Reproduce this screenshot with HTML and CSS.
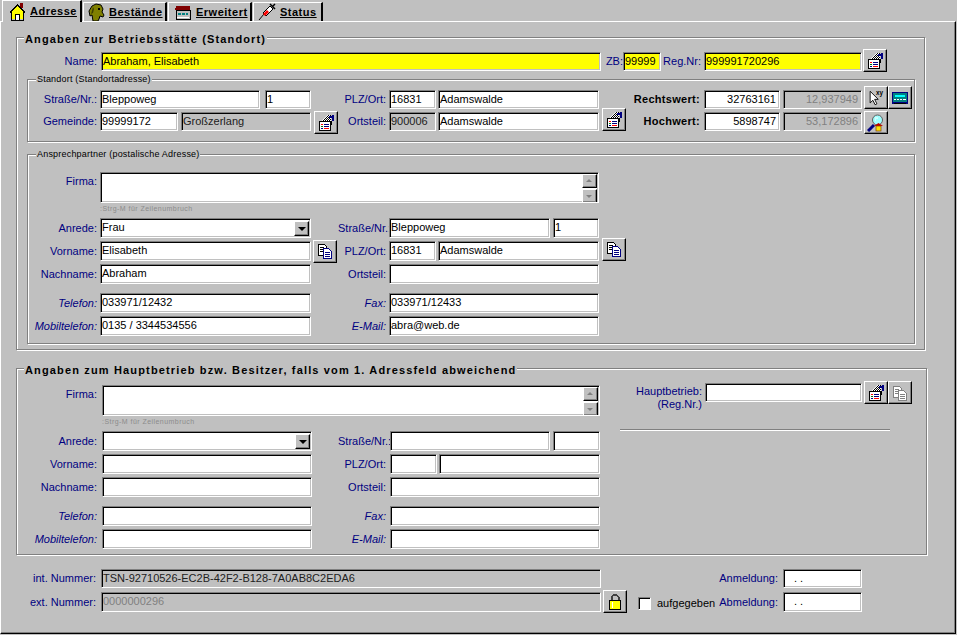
FILE: index.html
```html
<!DOCTYPE html>
<html lang="de">
<head>
  <meta charset="UTF-8">
  <title>Adresse</title>
  <link rel="stylesheet" href="styles.css">
</head>
<body>

<!-- Icons -->
<svg class="defs" width="0" height="0">
  <defs>
    <pattern id="dither" width="2" height="2" patternUnits="userSpaceOnUse">
      <rect width="2" height="2" fill="#fff"/>
      <rect width="1" height="1" fill="#000"/>
      <rect x="1" y="1" width="1" height="1" fill="#000"/>
    </pattern>
  </defs>
  <symbol id="i-house" viewBox="0 0 18 18" shape-rendering="crispEdges">
    <rect x="12" y="0" width="3" height="5" fill="#800000"/>
    <path d="M1 9 9 1l8 8-1 1-7-7-7 7z" fill="#000"/>
    <path d="M3 9 9 3l6 6v7H3z" fill="#ffff00"/>
    <path d="M3 9v8h12V9" fill="none" stroke="#000"/>
    <rect x="7" y="11" width="4" height="6" fill="#fff" stroke="#000"/>
  </symbol>
  <symbol id="i-dog" viewBox="0 0 18 18">
    <path d="M1 8 4 3l4-2 5 1 2 4-1 3 2 3-1 2-3-1-1 3-1 2H5L4 12 2 13z" fill="#808000" stroke="#000"/>
    <path d="M5 4 3 11l2-1 1-4z" fill="#404000"/>
    <rect x="10" y="5" width="2" height="2"/>
  </symbol>
  <symbol id="i-cabinet" viewBox="0 0 18 18" shape-rendering="crispEdges">
    <path d="M2 3h14v4H1z" fill="#800000"/>
    <rect x="2" y="7" width="14" height="9" fill="#c0c0c0" stroke="#000"/>
    <rect x="4" y="10" width="3" height="2" fill="#008080"/>
    <rect x="8" y="10" width="3" height="2" fill="#008080"/>
    <rect x="12" y="10" width="2" height="2" fill="#008080"/>
    <rect x="3" y="14" width="12" height="1" fill="#fff"/>
  </symbol>
  <symbol id="i-syringe" viewBox="0 0 18 18">
    <path d="M1 17 6 11" stroke="#000" fill="none"/>
    <path d="M5 10l7-7 3 3-7 7z" fill="#fff" stroke="#000"/>
    <path d="M5 11l4-4 2 2-4 4z" fill="#ff0000"/>
    <path d="M12 1l5 5M14 4l3-3" stroke="#000" fill="none" stroke-width="1.5"/>
  </symbol>
  <symbol id="i-form" viewBox="0 0 18 18" shape-rendering="crispEdges">
    <path d="M3 8 10 1h4v7z" fill="url(#dither)"/>
    <rect x="2.500" y="7.500" width="11" height="9" fill="#fff" stroke="#000"/>
    <rect x="4" y="10" width="2" height="1" fill="#ff0000"/>
    <rect x="7" y="10" width="5" height="1" fill="#000080"/>
    <rect x="4" y="12" width="2" height="1" fill="#008000"/>
    <rect x="7" y="12" width="5" height="1" fill="#000080"/>
    <rect x="4" y="14" width="2" height="1" fill="#000080"/>
    <rect x="7" y="14" width="5" height="1" fill="#ff0000"/>
    <rect x="15" y="1" width="2" height="6" fill="#000080"/>
    <rect x="12" y="2" width="3" height="2" fill="#000080"/>
    <rect x="14" y="7" width="1" height="4" fill="#000"/>
  </symbol>
  <symbol id="i-copy" viewBox="0 0 18 18" shape-rendering="crispEdges">
    <path d="M2.500 2.500h6l2 2v9h-8z" fill="#fff" stroke="currentColor"/>
    <path d="M4 5h4M4 7h4M4 9h3" stroke="currentColor" fill="none"/>
    <path d="M7.500 6.500h5l3 3v7h-8z" fill="#fff" stroke="var(--copy-front, #000080)"/>
    <path d="M9 10h5M9 12h5M9 14h5" stroke="var(--copy-front, #000080)" fill="none"/>
  </symbol>
  <symbol id="i-calc" viewBox="0 0 18 18" shape-rendering="crispEdges">
    <rect x="1" y="3" width="16" height="12" fill="#000080"/>
    <rect x="2" y="4" width="14" height="9" fill="#008080"/>
    <rect x="4" y="6" width="10" height="2" fill="#00ffff"/>
    <path d="M3 10h2v1H3zM6 10h2v1H6zM9 10h2v1H9zM12 10h3v1h-3z" fill="#fff"/>
    <rect x="3" y="14" width="12" height="1" fill="#000"/>
  </symbol>
  <symbol id="i-find" viewBox="0 0 18 18">
    <path d="M1 17 7 11" stroke="#000080" stroke-width="3" fill="none"/>
    <circle cx="10.500" cy="6" r="5" fill="#a0ffff" stroke="#606060"/>
    <path d="M8 4h3M8 6h1" stroke="#fff" fill="none"/>
    <path d="M7 12 11.500 9l4.500 3z" fill="#c00000"/>
    <rect x="9" y="12" width="5" height="5" fill="#ffe000" stroke="#804000" stroke-width=".7"/>
  </symbol>
  <symbol id="i-lock" viewBox="0 0 18 18" shape-rendering="crispEdges">
    <path d="M5.500 9V5l2-2h3l2 2v4" fill="none" stroke="#404040" stroke-width="2"/>
    <rect x="3.500" y="8.500" width="11" height="9" fill="#ffff00" stroke="#000"/>
    <rect x="6" y="10" width="1" height="6" fill="#fff"/>
  </symbol>
</svg>

<div class="tabs">
  <div class="tab tab-adresse active"><svg class="tab-icon"><use href="#i-house"/></svg><span>Adresse</span></div>
  <div class="tab tab-bestaende"><svg class="tab-icon"><use href="#i-dog"/></svg><span>Bestände</span></div>
  <div class="tab tab-erweitert"><svg class="tab-icon"><use href="#i-cabinet"/></svg><span>Erweitert</span></div>
  <div class="tab tab-status"><svg class="tab-icon"><use href="#i-syringe"/></svg><span>Status</span></div>
</div>

<div class="panel">

  <fieldset class="group group-first">
    <legend>Angaben zur Betriebsstätte (Standort)</legend>

    <div class="row">
      <label class="lbl wide w-80">Name:</label>
      <div class="field req w-500">Abraham, Elisabeth</div>
      <label class="lbl w-22 flush">ZB:</label>
      <div class="field req w-38">99999</div>
      <label class="lbl w-40">Reg.Nr:</label>
      <div class="field req w-158">999991720296</div>
      <button class="btn ml-1"><svg class="icon"><use href="#i-form"/></svg></button>
    </div>

    <fieldset class="sub sub-standort">
      <legend>Standort (Standortadresse)</legend>
      <div class="row">
        <div class="cell cell-a">
          <label class="lbl w-69">Straße/Nr.:</label>
          <div class="field w-160">Bleppoweg</div>
          <div class="field w-46 ml-5">1</div>
        </div>
        <div class="cell cell-b">
          <label class="lbl w-48">PLZ/Ort:</label>
          <div class="field w-47">16831</div>
          <div class="field w-161 ml-2">Adamswalde</div>
        </div>
        <div class="cell">
          <label class="lbl w-74 strong">Rechtswert:</label>
          <div class="field num w-76">32763161</div>
          <div class="field num off w-79 ml-3">12,937949</div>
          <button class="btn btn-high ml-2">
            <svg class="icon" viewBox="0 0 20 18">
              <path d="M3.500 1.500v13l3-3 2.500 5 2-1-2.500-5h4z" fill="#fff" stroke="#000"/>
              <text x="10" y="6" font-family="Liberation Sans, sans-serif" font-size="7" font-weight="700">xy</text>
            </svg>
          </button>
          <button class="btn btn-high"><svg class="icon"><use href="#i-calc"/></svg></button>
        </div>
      </div>
      <div class="row">
        <div class="cell cell-a">
          <label class="lbl w-69">Gemeinde:</label>
          <div class="field w-78">99999172</div>
          <div class="field dis w-130 ml-3">Großzerlang</div>
          <button class="btn btn-low ml-3"><svg class="icon"><use href="#i-form"/></svg></button>
        </div>
        <div class="cell cell-b">
          <label class="lbl w-48">Ortsteil:</label>
          <div class="field dis w-47">900006</div>
          <div class="field w-161 ml-2">Adamswalde</div>
          <button class="btn btn-high ml-3"><svg class="icon"><use href="#i-form"/></svg></button>
        </div>
        <div class="cell">
          <label class="lbl w-74 strong">Hochwert:</label>
          <div class="field num w-76">5898747</div>
          <div class="field num off w-79 ml-3">53,172896</div>
          <button class="btn btn-low ml-2"><svg class="icon"><use href="#i-find"/></svg></button>
        </div>
      </div>
    </fieldset>

    <fieldset class="sub sub-contact">
      <legend>Ansprechpartner (postalische Adresse)</legend>
      <div class="row row-memo">
        <label class="lbl w-69">Firma:</label>
        <div class="field memo w-499">
          <div class="scroll"><span class="spin spin-up"></span><span class="spin spin-down"></span></div>
        </div>
      </div>
      <div class="hint">:Strg-M für Zeilenumbruch</div>
      <div class="row row-tall">
        <div class="cell cell-a">
          <label class="lbl w-69">Anrede:</label>
          <div class="field combo w-211">Frau<span class="combo-btn"></span></div>
        </div>
        <div class="cell cell-b">
          <label class="lbl w-48">Straße/Nr.:</label>
          <div class="field w-161">Bleppoweg</div>
          <div class="field w-46 ml-3">1</div>
        </div>
      </div>
      <div class="row row-tall">
        <div class="cell cell-a">
          <label class="lbl w-69">Vorname:</label>
          <div class="field w-211">Elisabeth</div>
          <button class="btn btn-copy ml-2"><svg class="icon"><use href="#i-copy"/></svg></button>
        </div>
        <div class="cell cell-b">
          <label class="lbl w-48">PLZ/Ort:</label>
          <div class="field w-47">16831</div>
          <div class="field w-161 ml-2">Adamswalde</div>
          <button class="btn btn-high ml-3"><svg class="icon"><use href="#i-copy"/></svg></button>
        </div>
      </div>
      <div class="row row-tall">
        <div class="cell cell-a">
          <label class="lbl w-69">Nachname:</label>
          <div class="field w-211">Abraham</div>
        </div>
        <div class="cell cell-b">
          <label class="lbl w-48">Ortsteil:</label>
          <div class="field w-210"></div>
        </div>
      </div>
      <div class="row row-tall row-break">
        <div class="cell cell-a">
          <label class="lbl w-69 em">Telefon:</label>
          <div class="field w-211">033971/12432</div>
        </div>
        <div class="cell cell-b">
          <label class="lbl w-48 em">Fax:</label>
          <div class="field w-210">033971/12433</div>
        </div>
      </div>
      <div class="row row-tall">
        <div class="cell cell-a">
          <label class="lbl w-69 em">Mobiltelefon:</label>
          <div class="field w-211">0135 / 3344534556</div>
        </div>
        <div class="cell cell-b">
          <label class="lbl w-48 em">E-Mail:</label>
          <div class="field w-210">abra@web.de</div>
        </div>
      </div>
    </fieldset>
  </fieldset>

  <fieldset class="group group-second">
    <legend>Angaben zum Hauptbetrieb bzw. Besitzer, falls vom 1. Adressfeld abweichend</legend>
    <div class="owner">
      <div class="owner-form">
        <div class="row row-memo">
          <label class="lbl w-80">Firma:</label>
          <div class="field memo w-498 ml-2">
            <div class="scroll"><span class="spin spin-up"></span><span class="spin spin-down"></span></div>
          </div>
        </div>
        <div class="hint hint-owner">:Strg-M für Zeilenumbruch</div>
        <div class="row row-tall">
          <div class="cell cell-c">
            <label class="lbl w-80">Anrede:</label>
            <div class="field combo w-210 ml-2"><span class="combo-btn"></span></div>
          </div>
          <div class="cell">
            <label class="lbl w-48 wide">Straße/Nr.:</label>
            <div class="field w-160"></div>
            <div class="field w-47 ml-3"></div>
          </div>
        </div>
        <div class="row row-tall">
          <div class="cell cell-c">
            <label class="lbl w-80">Vorname:</label>
            <div class="field w-210 ml-2"></div>
          </div>
          <div class="cell">
            <label class="lbl w-48 wide">PLZ/Ort:</label>
            <div class="field w-47"></div>
            <div class="field w-161 ml-2"></div>
          </div>
        </div>
        <div class="row row-tall">
          <div class="cell cell-c">
            <label class="lbl w-80">Nachname:</label>
            <div class="field w-210 ml-2"></div>
          </div>
          <div class="cell">
            <label class="lbl w-48 wide">Ortsteil:</label>
            <div class="field w-210"></div>
          </div>
        </div>
        <div class="row row-tall row-break">
          <div class="cell cell-c">
            <label class="lbl w-80 em">Telefon:</label>
            <div class="field w-210 ml-2"></div>
          </div>
          <div class="cell">
            <label class="lbl w-48 wide em">Fax:</label>
            <div class="field w-210"></div>
          </div>
        </div>
        <div class="row row-tall">
          <div class="cell cell-c">
            <label class="lbl w-80 em">Mobiltelefon:</label>
            <div class="field w-210 ml-2"></div>
          </div>
          <div class="cell">
            <label class="lbl w-48 wide em">E-Mail:</label>
            <div class="field w-210"></div>
          </div>
        </div>
      </div>
      <div class="owner-side">
        <div class="owner-main">
          <label class="lbl-block">Hauptbetrieb:<br>(Reg.Nr.)</label>
          <div class="field w-157"></div>
          <button class="btn ml-2"><svg class="icon"><use href="#i-form"/></svg></button>
          <button class="btn btn-off"><svg class="icon"><use href="#i-copy"/></svg></button>
        </div>
        <div class="rule"></div>
      </div>
    </div>
  </fieldset>

  <div class="footer">
    <div class="footer-ids">
      <div class="row">
        <label class="lbl w-80">int. Nummer:</label>
        <div class="field dis w-500 ml-2">TSN-92710526-EC2B-42F2-B128-7A0AB8C2EDA6</div>
      </div>
      <div class="row row-tall">
        <label class="lbl w-80">ext. Nummer:</label>
        <div class="field dis off w-500 ml-2">0000000296</div>
        <button class="btn btn-top ml-2"><svg class="icon"><use href="#i-lock"/></svg></button>
      </div>
    </div>
    <div class="quit">
      <span class="check"></span>
      <span class="quit-label">aufgegeben</span>
    </div>
    <div class="footer-dates">
      <div class="row">
        <label class="lbl date-lbl">Anmeldung:</label>
        <div class="field w-79 date">. .</div>
      </div>
      <div class="row row-tall">
        <label class="lbl date-lbl">Abmeldung:</label>
        <div class="field w-79 date">. .</div>
      </div>
    </div>
  </div>

</div>

</body>
</html>
```

FILE: styles.css
```css
html, body {
  margin: 0;
  height: 635px;
  overflow: hidden;
}

body {
  background-color: #c0c0c0;
  color: #000;
  font-family: "Liberation Sans", Arial, sans-serif;
  font-size: 11px;
  line-height: 13px;
}

.defs {
  position: absolute;
}

/* Tabs */
.tabs {
  display: flex;
  height: 21px;
  padding-left: 2px;
}

.tab {
  display: flex;
  align-items: center;
  box-sizing: border-box;
  height: 19px;
  margin-top: 2px;
  background-color: #c0c0c0;
  border-top: 1px solid #fff;
  border-left: 1px solid #fff;
  border-right: 2px solid #000;
  font-weight: bold;
  letter-spacing: 0.5px;
  text-decoration: underline;
}

.tab.active {
  position: relative;
  z-index: 1;
  height: 22px;
  margin-top: 0;
}

.tab-adresse { width: 80px; padding-left: 5px; }
.tab-bestaende { width: 84px; margin-left: 1px; padding-left: 4px; }
.tab-erweitert { width: 84px; margin-left: 1px; padding-left: 5px; }
.tab-status { width: 70px; margin-left: 1px; padding-left: 4px; }

.tab-icon {
  flex: none;
  width: 18px;
  height: 18px;
  margin-right: 4px;
}

.tab-bestaende .tab-icon {
  margin-right: 3px;
}

/* Main panel */
.panel {
  box-sizing: border-box;
  width: 956px;
  height: 613px;
  padding: 7px 0 0 15px;
  border-top: 1px solid #fff;
  border-left: 1px solid #fff;
  border-right: 1px solid #000;
  border-bottom: 1px solid #000;
  box-shadow: inset -1px -1px 0 #808080;
}

/* Group boxes */
fieldset {
  margin: 0;
  padding: 0;
  min-width: 0;
  border: 1px solid #808080;
  box-shadow: 1px 1px 0 #fff, inset 1px 1px 0 #fff;
}

legend {
  background-color: #c0c0c0;
}

.group > legend {
  margin-left: 7px;
  padding: 4px 1px 0;
  font-weight: bold;
  letter-spacing: 1.15px;
}

.group-first {
  box-sizing: border-box;
  width: 909px;
  height: 321px;
  padding-top: 6px;
}

.group-second {
  box-sizing: border-box;
  width: 911px;
  height: 195px;
  margin-top: 10px;
  padding-top: 8px;
}

.sub {
  box-sizing: border-box;
  width: 888px;
  margin-left: 10px;
}

.sub > legend {
  margin-left: 8px;
  padding: 0 1px;
  font-size: 9px;
  line-height: 11px;
  letter-spacing: 0.2px;
}

.sub-standort {
  height: 68px;
  margin-top: 3px;
  padding-top: 5px;
}

.sub-contact {
  height: 195px;
  margin-top: 7px;
  padding-top: 12px;
}

/* Rows */
.row {
  display: flex;
  align-items: center;
  height: 19px;
  margin-bottom: 3px;
}

.row-memo {
  align-items: flex-start;
  height: 31px;
  margin-bottom: 0;
}

.row-memo .lbl {
  margin-top: 3px;
}

.row-tall {
  height: 20px;
}

.row-break {
  margin-top: 9px;
}

.cell {
  display: flex;
  align-items: center;
  flex: none;
  height: 100%;
}

.cell-a { width: 310px; }
.cell-b { width: 288px; }
.cell-c { width: 321px; }

.lbl {
  flex: none;
  margin-right: 3px;
  color: #000080;
  text-align: right;
  white-space: nowrap;
}

.lbl.flush { margin-right: 0; }
.lbl.wide { margin-right: 4px; }
.lbl.strong { margin-right: 4px; color: #000; font-weight: bold; letter-spacing: 0.3px; }
.lbl.em { font-style: italic; }

/* Sunken fields */
.field {
  position: relative;
  flex: none;
  box-sizing: border-box;
  height: 100%;
  padding: 2px 2px 0 1px;
  overflow: hidden;
  background-color: #fff;
  border: 1px solid;
  border-color: #808080 #fff #fff #808080;
  box-shadow: inset 1px 1px 0 #000, inset -1px -1px 0 #c0c0c0;
  white-space: nowrap;
}

.field.req { background-color: #ffff00; }
.field.num { text-align: right; padding-right: 3px; }
.field.dis { background-color: #c0c0c0; color: #202020; }
.field.off { background-color: #c0c0c0; color: #808080; }
.field.date { padding-left: 10px; }

.memo {
  height: 31px;
}

.scroll {
  position: absolute;
  top: 1px;
  right: 1px;
  display: flex;
  flex-direction: column;
  gap: 1px;
}

.spin {
  position: relative;
  display: block;
  box-sizing: border-box;
  width: 15px;
  height: 14px;
  background-color: #c0c0c0;
  border: 1px solid;
  border-color: #fff #000 #000 #fff;
  box-shadow: inset -1px -1px 0 #808080;
}

.spin::after {
  content: "";
  position: absolute;
  left: 3px;
  width: 0;
  height: 0;
  border-left: 3px solid transparent;
  border-right: 3px solid transparent;
}

.spin-up::after { top: 4px; border-bottom: 3px solid #808080; }
.spin-down::after { top: 5px; border-top: 3px solid #808080; }

.combo-btn {
  position: absolute;
  top: 2px;
  right: 1px;
  box-sizing: border-box;
  width: 15px;
  height: 15px;
  background-color: #c0c0c0;
  border: 1px solid;
  border-color: #fff #000 #000 #fff;
  box-shadow: inset -1px -1px 0 #808080;
}

.combo-btn::after {
  content: "";
  position: absolute;
  top: 5px;
  left: 3px;
  width: 0;
  height: 0;
  border-left: 4px solid transparent;
  border-right: 4px solid transparent;
  border-top: 4px solid #000;
}

.hint {
  box-sizing: border-box;
  height: 15px;
  margin-left: 72px;
  padding-top: 1px;
  color: #8c8c8c;
  font-size: 7px;
  letter-spacing: 0.45px;
  line-height: 9px;
}

.hint-owner {
  margin-left: 85px;
}

/* Toolbar buttons */
.btn {
  display: flex;
  align-items: center;
  justify-content: center;
  flex: none;
  box-sizing: border-box;
  width: 24px;
  height: 23px;
  margin-bottom: 2px;
  padding: 0;
  background-color: #c0c0c0;
  border: 1px solid;
  border-color: #fff #000 #000 #fff;
  box-shadow: inset -1px -1px 0 #808080;
  color: #000;
}

.btn-high { margin-bottom: 4px; }
.btn-low { margin-top: 2px; margin-bottom: 0; }
.btn-copy { margin-top: 1px; margin-bottom: 1px; }
.btn-top { margin-top: -1px; margin-bottom: 1px; }

.btn-off {
  color: #808080;
  --copy-front: #808080;
}

.icon {
  width: 18px;
  height: 18px;
}

/* Hauptbetrieb */
.owner {
  display: flex;
}

.owner-form {
  flex: none;
  width: 603px;
}

.owner-side {
  width: 292px;
}

.owner-main {
  display: flex;
  align-items: flex-start;
  height: 46px;
  margin-top: -4px;
}

.owner-main .field {
  height: 19px;
  margin-top: 2px;
}

.owner-main .btn {
  margin-bottom: 0;
}

.lbl-block {
  flex: none;
  box-sizing: border-box;
  width: 85px;
  padding-top: 4px;
  padding-right: 3px;
  color: #000080;
  text-align: right;
}

.rule {
  width: 270px;
  height: 1px;
  margin-top: 2px;
  background-color: #808080;
  box-shadow: 0 1px 0 #fff;
}

/* Unten */
.footer {
  display: flex;
  margin-top: 14px;
}

.footer .row:first-child {
  margin-bottom: 4px;
}

.footer-ids {
  flex: none;
  width: 622px;
}

.quit {
  display: flex;
  align-items: center;
  width: 77px;
  height: 20px;
  margin-top: 24px;
}

.check {
  flex: none;
  box-sizing: border-box;
  width: 13px;
  height: 13px;
  background-color: #fff;
  border: 1px solid;
  border-color: #808080 #fff #fff #808080;
  box-shadow: inset 1px 1px 0 #000;
}

.quit-label {
  margin-left: 6px;
}

.lbl.date-lbl {
  width: 63px;
  margin-right: 5px;
}

/* Widths */
.w-22 { width: 22px; }
.w-38 { width: 38px; }
.w-40 { width: 40px; }
.w-46 { width: 46px; }
.w-47 { width: 47px; }
.w-48 { width: 48px; }
.w-69 { width: 69px; }
.w-74 { width: 74px; }
.w-76 { width: 76px; }
.w-78 { width: 78px; }
.w-79 { width: 79px; }
.w-80 { width: 80px; }
.w-130 { width: 130px; }
.w-157 { width: 157px; }
.w-158 { width: 158px; }
.w-160 { width: 160px; }
.w-161 { width: 161px; }
.w-210 { width: 210px; }
.w-211 { width: 211px; }
.w-498 { width: 498px; }
.w-499 { width: 499px; }
.w-500 { width: 500px; }

.ml-1 { margin-left: 1px; }
.ml-2 { margin-left: 2px; }
.ml-3 { margin-left: 3px; }
.ml-5 { margin-left: 5px; }
```
